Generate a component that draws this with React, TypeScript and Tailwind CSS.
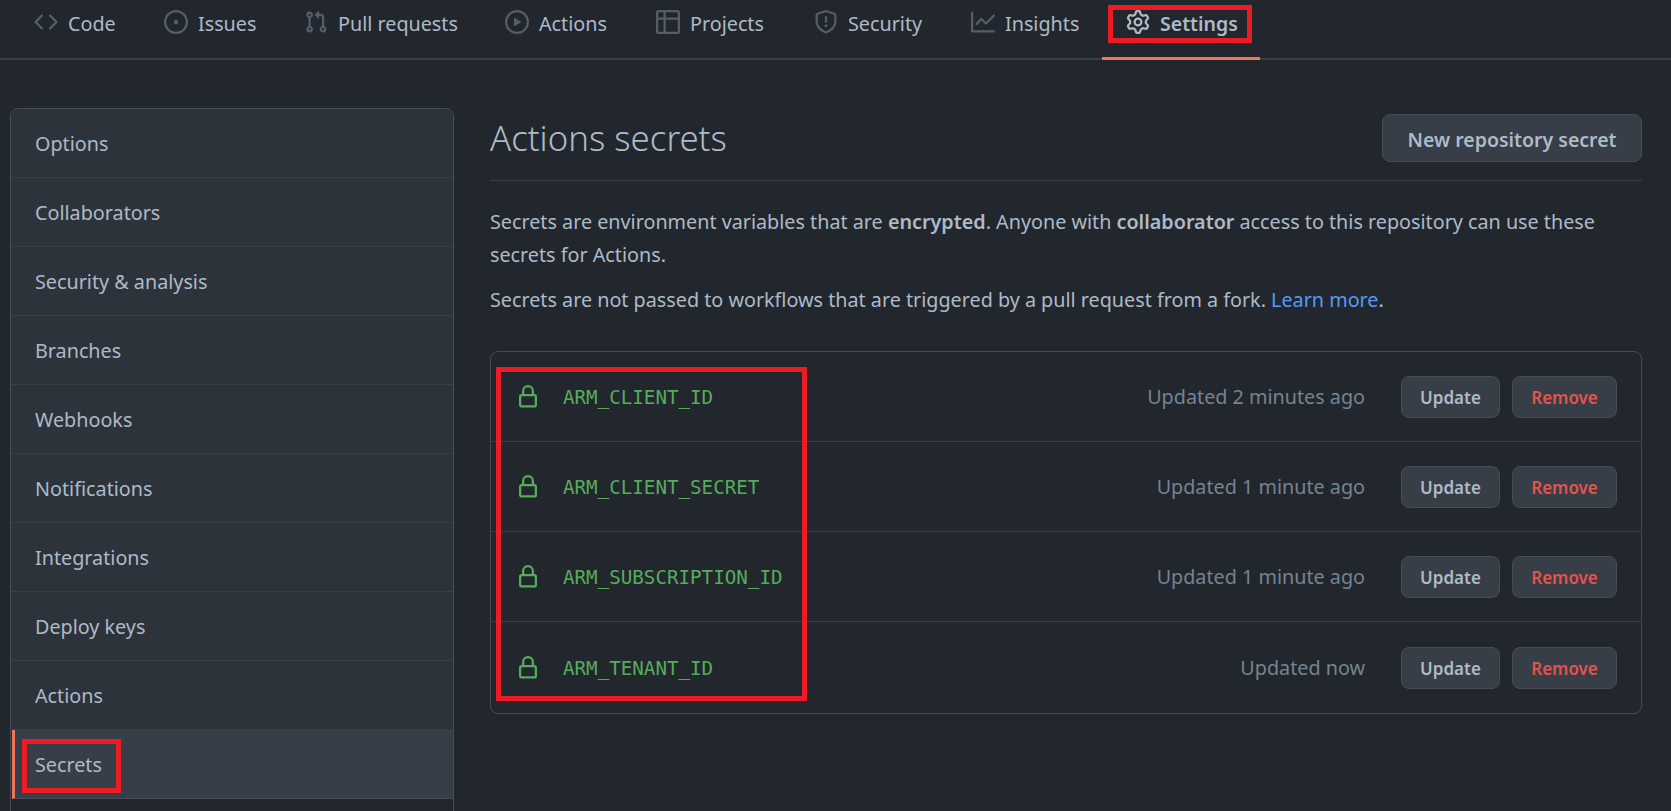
import type { ReactNode } from 'react';

const icons = {
  code: 'M4.72 3.22a.75.75 0 011.06 1.06L2.06 8l3.72 3.72a.75.75 0 11-1.06 1.06L.47 8.53a.75.75 0 010-1.06l4.25-4.25zm6.56 0a.75.75 0 10-1.06 1.06L13.94 8l-3.72 3.72a.75.75 0 101.06 1.06l4.25-4.25a.75.75 0 000-1.06l-4.25-4.25z',
  issues: 'M8 9.5a1.5 1.5 0 100-3 1.5 1.5 0 000 3zM8 0a8 8 0 100 16A8 8 0 008 0zM1.5 8a6.5 6.5 0 1113 0 6.5 6.5 0 01-13 0z',
  pull: 'M7.177 3.073L9.573.677A.25.25 0 0110 .854v4.792a.25.25 0 01-.427.177L7.177 3.427a.25.25 0 010-.354zM3.75 2.5a.75.75 0 100 1.5.75.75 0 000-1.5zm-2.25.75a2.25 2.25 0 113 2.122v5.256a2.251 2.251 0 11-1.5 0V5.372A2.25 2.25 0 011.5 3.25zM11 2.5h-1V4h1a1 1 0 011 1v5.628a2.251 2.251 0 101.5 0V5A2.5 2.5 0 0011 2.5zm1 10.25a.75.75 0 111.5 0 .75.75 0 01-1.5 0zM3.75 12a.75.75 0 100 1.5.75.75 0 000-1.5z',
  actions: 'M1.5 8a6.5 6.5 0 1113 0 6.5 6.5 0 01-13 0zM8 0a8 8 0 100 16A8 8 0 008 0zM6.379 5.227A.25.25 0 006 5.442v5.117a.25.25 0 00.379.214l4.264-2.559a.25.25 0 000-.428L6.379 5.227z',
  projects: 'M0 1.75C0 .784.784 0 1.75 0h12.5C15.216 0 16 .784 16 1.75v12.5A1.75 1.75 0 0114.25 16H1.75A1.75 1.75 0 010 14.25V1.75zM1.5 6.5v7.75c0 .138.112.25.25.25H5v-8H1.5zM5 5H1.5V1.75a.25.25 0 01.25-.25H5V5zm1.5 1.5v8h7.75a.25.25 0 00.25-.25V6.5h-8zm8-1.5h-8V1.5h7.75a.25.25 0 01.25.25V5z',
  security: 'M8.533.133a1.75 1.75 0 00-1.066 0l-5.25 1.68A1.75 1.75 0 001 3.48V7c0 1.566.32 3.182 1.303 4.682.983 1.498 2.585 2.813 5.032 3.855a1.7 1.7 0 001.33 0c2.447-1.042 4.049-2.357 5.032-3.855C14.68 10.182 15 8.566 15 7V3.48a1.75 1.75 0 00-1.217-1.667L8.533.133zm-.61 1.429a.25.25 0 01.153 0l5.25 1.68a.25.25 0 01.174.238V7c0 1.358-.275 2.666-1.057 3.86-.784 1.194-2.121 2.34-4.366 3.297a.2.2 0 01-.154 0c-2.245-.956-3.582-2.104-4.366-3.298C2.775 9.666 2.5 8.36 2.5 7V3.48a.25.25 0 01.174-.237l5.25-1.68zM9 10.5a1 1 0 11-2 0 1 1 0 012 0zm-.25-5.75a.75.75 0 10-1.5 0v3a.75.75 0 001.5 0v-3z',
  insights: 'M1.5 1.75a.75.75 0 00-1.5 0v12.5c0 .414.336.75.75.75h14.5a.75.75 0 000-1.5H1.5V1.75zm14.28 2.53a.75.75 0 00-1.06-1.06L10 7.94 7.53 5.47a.75.75 0 00-1.06 0L3.22 8.72a.75.75 0 001.06 1.06L7 7.06l2.47 2.47a.75.75 0 001.06 0l5.25-5.25z',
  settings: 'M7.429 1.525a6.593 6.593 0 011.142 0c.036.003.108.036.137.146l.289 1.105c.147.56.55.967.997 1.189.174.086.341.183.501.29.417.278.97.423 1.53.27l1.102-.303c.11-.03.175.016.195.046.219.31.41.641.573.989.014.031.022.11-.059.19l-.815.806c-.411.406-.562.957-.53 1.456a4.588 4.588 0 010 .582c-.032.499.119 1.05.53 1.456l.815.806c.08.08.073.159.059.19a6.494 6.494 0 01-.573.99c-.02.029-.086.074-.195.045l-1.103-.303c-.559-.153-1.112-.008-1.529.27-.16.107-.327.204-.5.29-.449.222-.851.628-.998 1.189l-.289 1.105c-.029.11-.101.143-.137.146a6.613 6.613 0 01-1.142 0c-.036-.003-.108-.037-.137-.146l-.289-1.105c-.147-.56-.55-.967-.997-1.189a4.502 4.502 0 01-.501-.29c-.417-.278-.97-.423-1.53-.27l-1.102.303c-.11.03-.175-.016-.195-.046a6.492 6.492 0 01-.573-.989c-.014-.031-.022-.11.059-.19l.815-.806c.411-.406.562-.957.53-1.456a4.587 4.587 0 010-.582c.032-.499-.119-1.05-.53-1.456l-.815-.806c-.08-.08-.073-.159-.059-.19a6.44 6.44 0 01.573-.99c.02-.029.086-.075.195-.045l1.103.303c.559.153 1.112.008 1.529-.27.16-.107.327-.204.5-.29.449-.222.851-.628.998-1.189l.289-1.105c.029-.11.101-.143.137-.146zM8 0c-.236 0-.47.01-.701.03-.743.065-1.29.615-1.458 1.261l-.29 1.106c-.017.066-.078.158-.211.224a5.994 5.994 0 00-.668.386c-.123.082-.233.09-.3.071L3.27 2.776c-.644-.177-1.392.02-1.82.63a7.977 7.977 0 00-.704 1.217c-.315.675-.111 1.422.363 1.891l.815.806c.05.048.098.147.088.294a6.084 6.084 0 000 .772c.01.147-.038.246-.088.294l-.815.806c-.474.469-.678 1.216-.363 1.891.2.428.436.835.704 1.218.428.609 1.176.806 1.82.63l1.103-.303c.066-.019.176-.011.299.071.213.143.436.272.668.386.133.066.194.158.212.224l.289 1.106c.169.646.715 1.196 1.458 1.26a8.094 8.094 0 001.402 0c.743-.064 1.29-.614 1.458-1.26l.29-1.106c.017-.066.078-.158.211-.224a5.98 5.98 0 00.668-.386c.123-.082.233-.09.3-.071l1.102.302c.644.177 1.392-.02 1.82-.63.268-.382.505-.789.704-1.217.315-.675.111-1.422-.364-1.891l-.814-.806c-.05-.048-.098-.147-.088-.294a6.1 6.1 0 000-.772c-.01-.147.039-.246.088-.294l.814-.806c.475-.469.679-1.216.364-1.891a7.992 7.992 0 00-.704-1.218c-.428-.609-1.176-.806-1.82-.63l-1.103.303c-.066.019-.176.011-.299-.071a5.991 5.991 0 00-.668-.386c-.133-.066-.194-.158-.212-.224L10.16 1.29C9.99.645 9.444.095 8.701.031A8.094 8.094 0 008 0zm1.5 8a1.5 1.5 0 11-3 0 1.5 1.5 0 013 0zM11 8a3 3 0 11-6 0 3 3 0 016 0z',
  lock: 'M4 4v2h-.25A1.75 1.75 0 002 7.75v5.5c0 .966.784 1.75 1.75 1.75h8.5A1.75 1.75 0 0014 13.25v-5.5A1.75 1.75 0 0012.25 6H12V4a4 4 0 10-8 0zm6.5 2V4a2.5 2.5 0 00-5 0v2h5zM12 7.5h.25a.25.25 0 01.25.25v5.5a.25.25 0 01-.25.25h-8.5a.25.25 0 01-.25-.25v-5.5a.25.25 0 01.25-.25H12z',
};

const tabs: { label: string; icon: keyof typeof icons; width: string }[] = [
  { label: 'Code', icon: 'code', width: 'w-[130px]' },
  { label: 'Issues', icon: 'issues', width: 'w-[140px]' },
  { label: 'Pull requests', icon: 'pull', width: 'w-[201px]' },
  { label: 'Actions', icon: 'actions', width: 'w-[151px]' },
  { label: 'Projects', icon: 'projects', width: 'w-[158px]' },
  { label: 'Security', icon: 'security', width: 'w-[157px]' },
  { label: 'Insights', icon: 'insights', width: 'w-[155px]' },
];

const menu = [
  'Options',
  'Collaborators',
  'Security & analysis',
  'Branches',
  'Webhooks',
  'Notifications',
  'Integrations',
  'Deploy keys',
  'Actions',
];

const secrets = [
  { name: 'ARM_CLIENT_ID', updated: 'Updated 2 minutes ago' },
  { name: 'ARM_CLIENT_SECRET', updated: 'Updated 1 minute ago' },
  { name: 'ARM_SUBSCRIPTION_ID', updated: 'Updated 1 minute ago' },
  { name: 'ARM_TENANT_ID', updated: 'Updated now' },
];

function Octicon({ name, className }: { name: keyof typeof icons; className: string }) {
  return (
    <svg viewBox="0 0 16 16" fill="currentColor" className={className}>
      <path fillRule="evenodd" d={icons[name]} />
    </svg>
  );
}

function Highlight({ className }: { className: string }) {
  return <div className={`absolute border-[5px] border-[#ed1c24] pointer-events-none ${className}`} />;
}

function Tab({ icon, width, children }: { icon: keyof typeof icons; width: string; children: ReactNode }) {
  return (
    <a className={`flex items-center gap-[10px] h-[46px] pt-[2px] mb-[14px] pl-6 shrink-0 whitespace-nowrap text-[19.75px] text-[#adbac7] ${width}`}>
      <Octicon name={icon} className="w-6 h-6 -mt-[4px] text-[#545d68]" />
      {children}
    </a>
  );
}

export default function App() {
  return (
    <div className="h-screen overflow-hidden bg-[#22272e] text-[#adbac7] font-['Noto_Sans',sans-serif]">
      <nav className="flex h-[60px] pl-[10px] border-b-2 border-[#373e47]">
        {tabs.map((t) => (
          <Tab key={t.label} icon={t.icon} width={t.width}>{t.label}</Tab>
        ))}
        <a className="relative flex items-center gap-[10px] w-[158px] h-[60px] pt-[2px] pb-[11px] pl-6 border-b-[3px] border-[#ec775c] text-[19.5px] font-semibold whitespace-nowrap">
          <Octicon name="settings" className="w-6 h-6 -mt-[4px] shrink-0 text-[#adbac7]" />
          Settings
          <Highlight className="left-[6px] top-[5px] w-[144px] h-[38px]" />
        </a>
      </nav>

      <div className="flex mt-[48px] ml-[10px] mr-[29px] gap-[36px]">
        <aside className="w-[444px] shrink-0 min-h-[800px] rounded-t-lg border border-[#444c56]">
          {menu.map((item) => (
            <div key={item} className="h-[69px] flex items-center pt-px pl-[24px] bg-[#2d333b] border-b border-[#373e47] text-[19.75px] first:rounded-t-lg">
              {item}
            </div>
          ))}
          <div className="relative h-[69px] ml-px flex items-center pt-px pl-[20px] bg-[#373e47] border-l-[3px] border-b border-l-[#ec775c] border-b-[#444c56] text-[19.75px]">
            Secrets
            <Highlight className="left-[7px] top-[9px] w-[99px] h-[54px]" />
          </div>
        </aside>

        <main className="flex-1 min-w-0">
          <div className="flex items-center justify-between mt-[6px] pb-[18px] border-b border-[#373e47]">
            <h1 className="text-[34.8px] font-light leading-[48px]">Actions secrets</h1>
            <button className="w-[260px] h-[48px] pt-[3px] rounded-lg bg-[#373e47] border border-[#444c56] text-[19.5px] font-semibold">
              New repository secret
            </button>
          </div>

          <p className="mt-[24px] text-[19.75px] leading-[33px]">
            Secrets are environment variables that are <strong className="font-semibold">encrypted</strong>. Anyone with <strong className="font-semibold">collaborator</strong> access to this repository can use these secrets for Actions.
          </p>
          <p className="mt-[12px] text-[19.75px] leading-[33px]">
            Secrets are not passed to workflows that are triggered by a pull request from a fork. <a className="text-[#539bf5]">Learn more</a>.
          </p>

          <div className="relative mt-[35px] rounded-lg border border-[#444c56]">
            <div>
              {secrets.map((s) => (
                <div key={s.name} className="flex items-center h-[90px] last:h-[91px] pl-[25px] pr-[24px] border-b last:border-b-0 border-[#373e47]">
                  <Octicon name="lock" className="w-6 h-6 text-[#57ab5a]" />
                  <code className="ml-[23px] pt-[3px] text-[19.2px] text-[#57ab5a] font-['DejaVu_Sans_Mono',monospace]">{s.name}</code>
                  <span className="ml-auto pt-px text-[19.75px] text-[#768390]">{s.updated}</span>
                  <button className="ml-[36px] w-[99px] h-[42px] pt-[2px] rounded-lg bg-[#373e47] border border-[#444c56] text-[17px] font-semibold">
                    Update
                  </button>
                  <button className="ml-[12px] w-[105px] h-[42px] pt-[2px] rounded-lg bg-[#373e47] border border-[#444c56] text-[17px] font-semibold text-[#e5534b]">
                    Remove
                  </button>
                </div>
              ))}
            </div>
            <Highlight className="left-[5px] top-[15px] w-[311px] h-[334px]" />
          </div>
        </main>
      </div>
    </div>
  );
}
